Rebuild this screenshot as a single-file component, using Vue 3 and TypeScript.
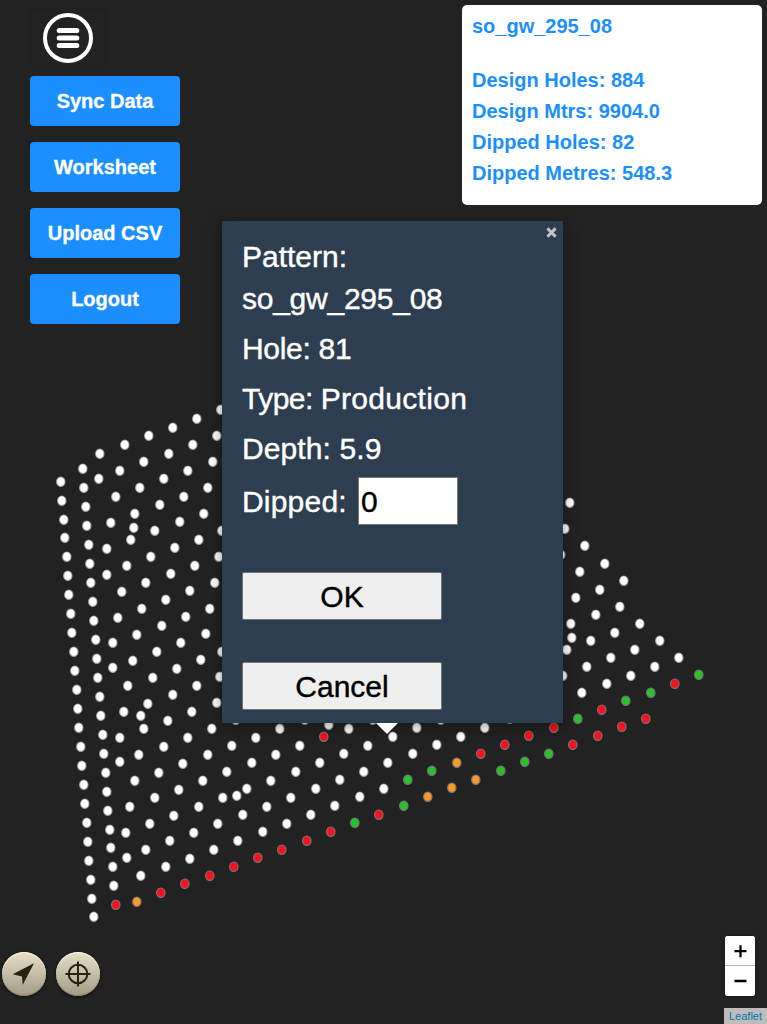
<script setup lang="ts">
import { ref } from 'vue'

type Status = 'plain' | 'red' | 'green' | 'orange'
interface Hole {
  x: number
  y: number
  status: Status
}

const groups: Record<Status, string> = {
  plain: `60,481 61,500 63,519 64,537 66,556 67,575 68,594 70,613 71,632 73,651 74,670 76,689 77,708 78,727 80,746
    81,765 83,784 84,803 86,822 87,841 88,860 90,879 91,898 93,916
    82,468 83,487 85,506 86,525 88,544 89,563 90,582 92,601 93,620 95,639 96,658 97,677 99,696 100,715 102,734 103,753
    105,772 106,791 107,810 109,829 110,847 112,866 113,885
    99,453 124,444 148,435 172,427 196,418 220,409 98,478 119,470 143,461 168,453 192,444 216,435
    115,496 139,487 163,478 187,470 212,461 110,522 134,513 159,504 183,496 207,487 133,527
    106,548 130,539 154,530 179,521 203,513 221,530 106,574 126,565 150,556 174,547 198,539 170,573 194,565 218,556
    121,591 145,582 117,617 141,608 165,599 189,590 214,582 112,642 136,634 161,625 185,616 209,608
    112,667 132,660 156,651 180,642 205,633 221,651 127,685 152,677 176,668 200,659 219,676
    123,711 147,703 172,694 196,685 216,702 140,715 143,728 167,720 191,711 211,728 119,737 163,746 187,737 138,754 207,754
    119,761 134,780 158,772 182,763 129,806 154,797 178,789 202,780 226,771 125,832 149,823 173,815 198,806 222,797
    126,857 145,849 169,840 193,832 217,823 140,875 165,866 189,858 213,849
    235,719 255,737 279,728 304,719 328,724 348,728 372,719 392,736 231,745 275,754 299,745 343,753 367,745
    251,762 295,771 319,762 363,771 387,762 246,788 236,795 270,780 315,788 339,779 383,788
    242,814 266,806 290,797 334,805 359,796 237,840 262,831 286,823 310,814
    416,727 440,719 460,736 484,727 509,718 412,753 436,744
    569,502 564,528 560,554 584,545 604,563 623,580 579,571 599,589 619,606 639,623 659,640 678,657
    575,597 595,614 614,632 634,649 654,666 570,623 590,640 571,637 566,649 610,657 630,675 586,666 562,675 606,683 581,692`,
  red: `115,904 160,892 184,883 209,875 323,736 233,866 257,857 281,849 306,840 330,831 378,814
    480,753 504,744 528,735 553,727 674,683 601,709 645,718 621,726 597,735 572,744`,
  green: `354,822 403,805 407,779 431,770 500,770 524,761 548,753 698,674 650,692 625,700 577,718`,
  orange: `136,901 456,762 427,796 451,787 475,779`,
}

const holes: Hole[] = (Object.keys(groups) as Status[]).flatMap((status) =>
  groups[status].trim().split(/\s+/).map((pair) => {
    const [x, y] = pair.split(',').map(Number)
    return { x: x + 0.8, y: y + 0.7, status }
  }),
)

const actions = ['Sync Data', 'Worksheet', 'Upload CSV', 'Logout']
const stats = ['Design Holes: 884', 'Design Mtrs: 9904.0', 'Dipped Holes: 82', 'Dipped Metres: 548.3']
const dipped = ref('0')
</script>

<template>
  <main class="map">
    <svg class="holes" width="767" height="1024" viewBox="0 0 767 1024">
      <ellipse
        v-for="(h, i) in holes"
        :key="i"
        :cx="h.x"
        :cy="h.y"
        rx="4.2"
        ry="4.7"
        :class="h.status"
      />
    </svg>

    <nav class="side">
      <button class="menu" aria-label="Menu">
        <svg width="50" height="50" viewBox="0 0 50 50">
          <circle cx="25" cy="25" r="23" fill="none" stroke="#fff" stroke-width="4" />
          <path d="M16.2 17.6H33.8M16.2 25H33.8M16.2 32.4H33.8" stroke="#fff" stroke-width="5" stroke-linecap="round" />
        </svg>
      </button>
      <button v-for="a in actions" :key="a" class="action">{{ a }}</button>
    </nav>

    <aside class="info">
      <div class="title">so_gw_295_08</div>
      <div v-for="s in stats" :key="s">{{ s }}</div>
    </aside>

    <section class="popup">
      <svg class="close" width="11" height="11" viewBox="0 0 11 11">
        <path d="M1.4 1.4L9.6 9.6M9.6 1.4L1.4 9.6" stroke="#c3c3c3" stroke-width="2.9" />
      </svg>
      <p>Pattern:<br /><span class="name">so_gw_295_08</span></p>
      <p class="hole">Hole: 81</p>
      <p><span class="type">Type: </span><span class="kind">Production</span></p>
      <p class="depth">Depth: 5.9</p>
      <label class="field"><span>Dipped:</span><input v-model="dipped" /></label>
      <button class="btn ok">OK</button>
      <button class="btn cancel">Cancel</button>
      <svg class="tip" width="24" height="12" viewBox="0 0 24 12"><path d="M1 0H23L12 11Z" fill="#fff" /></svg>
    </section>

    <div class="locate">
      <button class="round" aria-label="Locate">
        <svg width="44" height="44" viewBox="0 0 44 44"><path d="M32 11.3L10.7 22.3L20 24.4L20.7 33Z" fill="#292208" /></svg>
      </button>
      <button class="round" aria-label="Target">
        <svg width="44" height="44" viewBox="0 0 44 44" fill="none" stroke="#292208" stroke-width="2">
          <circle cx="22" cy="22" r="9.3" />
          <path d="M22 9.5V34.5M9.5 22H34.5" />
        </svg>
      </button>
    </div>

    <div class="zoom">
      <button aria-label="Zoom in"><svg width="30" height="30" viewBox="0 0 30 30"><path d="M9.5 15.2H21.5M15.5 9.2V21.2" stroke="#000" stroke-width="2.2" /></svg></button>
      <button aria-label="Zoom out"><svg width="30" height="30" viewBox="0 0 30 30"><path d="M9.5 15H21.5" stroke="#000" stroke-width="2.4" /></svg></button>
    </div>
    <a class="credit">Leaflet</a>
  </main>
</template>

<style>
body {
  margin: 0;
  background: #222;
}
</style>

<style scoped>
.map {
  position: relative;
  width: 767px;
  height: 1024px;
  overflow: hidden;
  background: #222;
  font-family: 'Liberation Sans', Arial, sans-serif;
}
button {
  box-sizing: border-box;
  margin: 0;
  padding: 0;
  border: 0;
  font-family: inherit;
}
svg {
  display: block;
}
.holes {
  position: absolute;
  inset: 0;
}
.holes ellipse {
  stroke: #777;
  stroke-width: 1.2;
}
.holes .plain {
  fill: #fff;
  stroke: #aaa;
  stroke-opacity: 0.8;
}
.holes .red {
  fill: #ff0e1c;
}
.holes .green {
  fill: #24c428;
}
.holes .orange {
  fill: #ff972a;
}
.side {
  position: absolute;
  left: 30px;
  top: 8px;
  display: flex;
  flex-direction: column;
  align-items: flex-start;
  gap: 16px;
}
.menu {
  width: 76px;
  height: 60px;
  margin-bottom: -8px;
  padding-left: 13px;
  background: transparent;
  border-radius: 4px;
  box-shadow: inset 0 0 0 1px #1f1f1f;
}
.action {
  width: 150px;
  height: 50px;
  border-radius: 4px;
  background: #1b8fff;
  color: #fff;
  font-size: 20px;
  font-weight: bold;
  -webkit-text-stroke: 0.3px;
}
.info {
  position: absolute;
  left: 462px;
  top: 5px;
  box-sizing: border-box;
  width: 300px;
  height: 200px;
  padding: 6px 10px;
  border-radius: 5px;
  background: #fff;
  color: #1b8fff;
  font-size: 20px;
  font-weight: bold;
  line-height: 31px;
}
.title {
  margin-bottom: 23px;
}
.popup {
  position: absolute;
  left: 222px;
  top: 221px;
  box-sizing: border-box;
  width: 341px;
  height: 502px;
  padding: 15px 20px 0;
  background: #2c3e50;
  box-shadow: 0 3px 14px rgba(0, 0, 0, 0.4);
  color: #fff;
  font-size: 30px;
  line-height: 42px;
  display: flex;
  flex-direction: column;
  align-items: flex-start;
  -webkit-text-stroke: 0.4px;
}
.popup p {
  margin: 0 0 8px;
  white-space: pre;
}
.name {
  letter-spacing: -0.25px;
}
.hole {
  letter-spacing: -0.3px;
}
.type {
  letter-spacing: -0.5px;
}
.kind {
  letter-spacing: 0.3px;
}
.depth {
  letter-spacing: 0.1px;
}
.close {
  position: absolute;
  right: 6px;
  top: 6px;
}
.tip {
  position: absolute;
  left: 153px;
  top: 502px;
}
.field {
  display: flex;
  height: 48px;
  margin-top: -1px;
  align-items: center;
}
.field span {
  width: 116px;
  letter-spacing: 0.2px;
  position: relative;
  top: 1px;
}
.field input {
  box-sizing: border-box;
  width: 100px;
  height: 48px;
  margin: 0;
  padding: 3px 2px 1px;
  border: 1px solid #767676;
  border-radius: 0;
  background: #fff;
  color: #000;
  font: 30px 'Liberation Sans', Arial, sans-serif;
  outline: none;
}
.btn {
  width: 200px;
  height: 48px;
  padding-top: 2px;
  border: 1px solid #767676;
  border-radius: 2px;
  background: #efefef;
  color: #000;
  font-size: 30px;
}
.ok {
  margin-top: 46.5px;
}
.cancel {
  margin-top: 42px;
}
.locate {
  position: absolute;
  left: 2px;
  top: 952px;
  display: flex;
  gap: 10px;
}
.round {
  width: 44px;
  height: 44px;
  border-radius: 50%;
  background: linear-gradient(#e6dfc6, #a49c82);
  box-shadow: inset 0 1px 1px #fffbe8, inset 0 -1px 1px #8a836b, 0 1px 3px rgba(0, 0, 0, 0.7);
}
.zoom {
  position: absolute;
  left: 725px;
  top: 936px;
  width: 30px;
  height: 60px;
  overflow: hidden;
  border-radius: 3px;
  background: #fff;
  box-shadow: 0 0 2px rgba(0, 0, 0, 0.7);
}
.zoom button {
  display: block;
  width: 30px;
  height: 30px;
  background: #fff;
}
.zoom button:first-child {
  border-bottom: 1px solid #bbb;
}
.credit {
  position: absolute;
  left: 724px;
  top: 1008px;
  width: 43px;
  height: 16px;
  padding-left: 5px;
  box-sizing: border-box;
  background: #bdbdbd;
  color: #0078a8;
  font-size: 11px;
  line-height: 16px;
}
</style>
